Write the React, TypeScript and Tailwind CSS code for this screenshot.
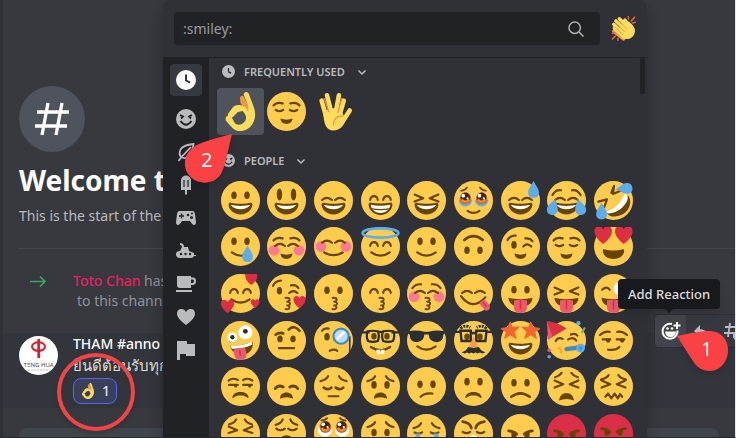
import React from 'react';

const BROWN = '#664500';

const line = {
  fill: 'none',
  stroke: BROWN,
  strokeWidth: 2,
  strokeLinecap: 'round' as const,
  strokeLinejoin: 'round' as const,
};

type OvalsProps = { y?: number; ry?: number; left?: number; right?: number };

const Ovals = ({ y = 13.2, ry = 3.5, left = 12, right = 24 }: OvalsProps) => (
  <g fill={BROWN}>
    <ellipse cx={left} cy={y} rx="2.5" ry={ry} />
    <ellipse cx={right} cy={y} rx="2.5" ry={ry} />
  </g>
);

const HappyEyes = () => <path {...line} d="M8.5 17.5q.5-3.5 3.500-3.500t3.500 3.500M20.500 17.500q.5-3.500 3.500-3.500t3.500 3.500" />;

const WideHappyEyes = () => <path {...line} d="M7.5 17.5q4.500-4 9 0M19.500 17.500q4.500-4 9 0" />;

const Lids = () => <path {...line} d="M8 16.500q3.500 2.500 7 0M21 16.500q3.500 2.500 7 0" />;

const Squint = () => <path {...line} d="M7 12.500l8 3.500-8 3M29 12.500l-8 3.500 8 3" />;

const RaisedBrows = () => <path {...line} d="M6 12.500q3-3.500 8.500-2M30 12.500q-3-3.500-8.500-2" />;

const SadBrows = () => <path {...line} d="M6 13q5-1 7-4.500M30 13q-5-1-7-4.500" />;

const OpenMouth = () => (
  <>
    <path fill={BROWN} d="M18 21c-3.600 0-6-.4-9-1-.7-.1-2 0-2 2 0 4 4.600 9 11 9s11-5 11-9c0-2-1.300-2.100-2-2-3 .6-5.400 1-9 1z" />
    <path fill="#fff" d="M9 22s3 1 9 1 9-1 9-1-2 4-9 4-9-4-9-4z" />
  </>
);

const SoftSmile = () => <path {...line} d="M9.500 23.500q8.500 6 17 0" />;

const TinySmile = () => <path fill={BROWN} d="M12.500 24.500q5.500 2 11 0c0 3-2.500 5-5.500 5s-5.500-2-5.500-5z" />;

const Frown = () => <path fill={BROWN} d="M10.500 28C11 24.500 14 23 18 23s7 1.500 7.500 5c.1.600-.5.700-1 .3C22.500 26.800 21 26.300 18 26.300s-4.500.5-6.500 2c-.5.400-1.100.3-1-.3z" />;

const SmallFrown = () => <path fill={BROWN} d="M12 29c0-3.500 2.500-5.500 6-5.500s6 2 6 5.500c-1 .5-3-1-6-1s-5 1.500-6 1z" />;

const Kiss = () => <path {...line} strokeWidth="1.7" d="M17 22c5-.5 5 3 1.500 3.500 4 .5 3.500 3.500 0 3.500 3.500.5 3 4-1.500 3.500" />;

const Tongue = () => (
  <>
    <path fill={BROWN} d="M7 22c5 1.500 17 1.500 22 0 0 6-5 8-11 8S7 28 7 22z" />
    <path fill="#ea596e" d="M12 24.500q6-2 12 0v6.500q0 5-6 5t-6-5z" />
    <path fill="none" stroke="#dd2e44" strokeWidth="1.5" strokeLinecap="round" d="M18 25v7" />
  </>
);

const Heart = ({ x, y, s }: { x: number; y: number; s: number }) => (
  <path
    fill="#dd2e44"
    transform={`translate(${x} ${y}) scale(${s})`}
    d="M0 9C-4 6-9 1-9-4c0-6 7-7 9-2 2-5 9-4 9 2 0 5-5 10-9 13z"
  />
);

const Tear = ({ x, y, turn = 0 }: { x: number; y: number; turn?: number }) => (
  <path fill="#5dadec" transform={`translate(${x} ${y}) rotate(${turn})`} d="M0-8c2 4 5 7 5 10.500C5 5.500 3 7.500 0 7.500s-5-2-5-5C-5-1-2-4 0-8z" />
);

const Cheeks = ({ y = 20 }: { y?: number }) => (
  <g fill="#ff7892">
    <circle cx="6.5" cy={y} r="5" />
    <circle cx="29.5" cy={y} r="5" />
  </g>
);

const AngryEyes = () => (
  <>
    <Ovals y={19} ry={3} />
    <path {...line} strokeWidth="2.5" d="M7 15.500q4 0 7.500 3M29 15.500q-4 0-7.500 3" />
  </>
);

const GlassyEyes = ({ y }: { y: number }) => (
  <>
    <circle cx="10.5" cy={y} r="5.5" fill="#c1694f" />
    <circle cx="25.5" cy={y} r="5.5" fill="#c1694f" />
    <circle cx="10.5" cy={y - 1} r="4.3" fill="#422b0d" />
    <circle cx="25.5" cy={y - 1} r="4.3" fill="#422b0d" />
    <path fill="none" stroke="#f4900c" strokeWidth="2" d={`M7 ${y + 1}q3.500 4 7 0M22 ${y + 1}q3.500 4 7 0`} />
    <g fill="#fff">
      <circle cx="8.5" cy={y - 2.5} r="1.7" />
      <circle cx="12.5" cy={y} r="1" />
      <circle cx="23.5" cy={y - 2.5} r="1.7" />
      <circle cx="27.5" cy={y} r="1" />
    </g>
  </>
);

const faces: [string, React.ReactNode][] = [
  ['grinning', <><Ovals /><OpenMouth /></>],
  ['smiley', <><Ovals y={12.5} ry={5.5} left={11.5} right={24.5} /><OpenMouth /></>],
  ['smile', <><WideHappyEyes /><OpenMouth /></>],
  ['grin', (
    <>
      <HappyEyes />
      <path fill={BROWN} d="M7 22c0-2 1.300-2.200 2-2 6 1 12 1 18 0 .7-.2 2 0 2 2 0 4-4.500 9.500-11 9.500S7 26 7 22z" />
      <path fill="#fff" d="M9 22c6 1.200 12 1.200 18 0 0 4-4 7.500-9 7.500S9 26 9 22z" />
      <path fill="none" stroke={BROWN} strokeWidth="1.2" d="M9 25.500q9 2 18 0" />
    </>
  )],
  ['laughing', <><Squint /><OpenMouth /></>],
  ['face holding back tears', (
    <>
      <path {...line} strokeWidth="1.5" d="M6.500 9q4-.5 5.500-3M29.500 9q-4-.5-5.500-3" />
      <ellipse cx="10.5" cy="18" rx="6" ry="5.5" fill="#5dadec" />
      <ellipse cx="25.5" cy="18" rx="6" ry="5.5" fill="#5dadec" />
      <ellipse cx="10.5" cy="15.5" rx="6" ry="4.5" fill="#fff" />
      <ellipse cx="25.5" cy="15.5" rx="6" ry="4.5" fill="#fff" />
      <GlassyEyes y={16} />
      <path {...line} d="M12.500 27.500q5.500 4 11 0" />
    </>
  )],
  ['sweat smile', <><WideHappyEyes /><OpenMouth /><Tear x={30} y={8} /></>],
  ['joy', <><path {...line} d="M5 13q3-5.500 8-4.500M31 13q-3-5.500-8-4.500" /><WideHappyEyes /><OpenMouth /><Tear x={5.5} y={24} turn={15} /><Tear x={30.5} y={24} turn={-15} /></>],
  ['rolling on the floor laughing', (
    <>
      <path {...line} d="M4 19l8-2-2.500 7M16 11l2.500-6.500L17.500 12l7-3" />
      <path fill={BROWN} d="M31 13c5 5 2 14-4 17.500-5 3-13 3.500-15-1 9-1 15-7 19-16.500z" />
      <path fill="#fff" d="M29.500 12c2 1 2 4 1 6.500-3 6-9 11-17 11.500-1.500 0-2-1.500-1-2 8-3 12-8 15.500-15.500.4-.8 1-.9 1.500-.5z" />
      <Tear x={28} y={7} turn={-95} />
      <Tear x={7} y={28} />
    </>
  )],
  ['smiling face with tear', <><Ovals /><path {...line} d="M10 23.500q8 5.500 15 1" /><Tear x={24.5} y={25} /></>],
  ['relaxed', <><Cheeks y={21.5} /><RaisedBrows /><WideHappyEyes /><TinySmile /></>],
  ['blush', <><Cheeks y={18} /><path {...line} d="M7.500 14.500q4.500-4 9 0M19.500 14.500q4.500-4 9 0" /><path {...line} d="M9.500 23.500q8.500 5 17 0" /></>],
  ['innocent', (
    <>
      <HappyEyes />
      <SoftSmile />
      <ellipse cx="18" cy="5.500" rx="16.5" ry="4.3" fill="none" stroke="#5dadec" strokeWidth="2.5" />
    </>
  )],
  ['slight smile', <><Ovals /><SoftSmile /></>],
  ['upside down', <><Ovals y={21.5} /><path {...line} strokeWidth="2.5" d="M9.500 12q8.500-7 17 0" /></>],
  ['wink', <><path {...line} d="M6 12q2.500-4.500 7.500-4M22.500 10.500q4-.5 6.500 2.500" /><ellipse cx="12" cy="16.5" rx="2.5" ry="3.5" fill={BROWN} /><path {...line} d="M20.500 18q4-4 7.500 0" /><TinySmile /></>],
  ['relieved', <><RaisedBrows /><Lids /><TinySmile /></>],
  ['heart eyes', <><Heart x={8.5} y={7.5} s={0.9} /><Heart x={27.5} y={7.5} s={0.9} /><path fill={BROWN} d="M9 20.500q9 2.500 18 0c2 0 1 9-9 9s-11-9-9-9z" /></>],
  ['smiling face with hearts', <><HappyEyes /><SoftSmile /><Heart x={28} y={4.5} s={0.62} /><Heart x={6} y={30} s={0.68} /><Heart x={31.5} y={27.5} s={0.45} /></>],
  ['kissing heart', <><path {...line} d="M5.500 11q2-4.500 7.500-5M22 10.500q5-1 7 2.500" /><ellipse cx="11.5" cy="15.5" rx="2.5" ry="3.5" fill={BROWN} /><path {...line} d="M20.500 17.500q4-3.500 7.500 0" /><Kiss /><Heart x={30} y={26} s={0.62} /></>],
  ['kissing', <><Ovals y={15} /><Kiss /></>],
  ['kissing smiling eyes', <><HappyEyes /><Kiss /></>],
  ['kissing closed eyes', <><Cheeks y={21} /><path {...line} d="M5 13q3-4 8-3.500M31 13q-3-4-8-3.500" /><WideHappyEyes /><Kiss /></>],
  ['yum', <><WideHappyEyes /><path {...line} d="M6.500 20.500q11 14 22.500 1" /><path fill="#ea596e" d="M23 27l5-4 5 6q1 5-4 5z" /><path stroke="#dd2e44" strokeWidth="1.2" d="M26.500 26l3.500 4" /></>],
  ['stuck out tongue', <><Ovals y={14.5} /><Tongue /></>],
  ['squinting tongue', <><Squint /><Tongue /></>],
  ['winking tongue', <><path {...line} d="M7.500 14.500q4.500-4 7 0" /><circle cx="24" cy="13.5" r="6" fill="#f5f8fa" /><circle cx="25" cy="13.5" r="2" fill="#292f33" /><Tongue /></>],
  ['zany', (
    <>
      <circle cx="10.5" cy="15" r="4.5" fill="#fff" />
      <circle cx="22.5" cy="10.5" r="6.5" fill="#fff" />
      <circle cx="10.5" cy="15" r="2" fill="#292f33" />
      <circle cx="22.5" cy="9.5" r="2.2" fill="#292f33" />
      <path fill={BROWN} d="M8.500 22.500q12 1 20.500-4c1.500 6-2 12-8 12.500-8 1-12-4-12.500-8.500z" />
      <path fill="#fff" d="M8.500 22.500q12 1 20.500-4l-.5 3.500q-8 4-18.500 3.500z" />
      <path fill="#ea596e" d="M11 27q6-3 11.500-2l1 6q0 5-5 5t-6-4z" />
      <path stroke="#dd2e44" strokeWidth="1.5" d="M17 27l1 5" />
    </>
  )],
  ['raised eyebrow', <><Ovals y={16.5} ry={3.2} /><path {...line} d="M8 12.500q4-2.500 7-1M20 8q5-5 10 1" strokeWidth="2.5" /><path {...line} d="M11 25h14" /></>],
  ['monocle', (
    <>
      <ellipse cx="12" cy="14.5" rx="2.5" ry="3.5" fill={BROWN} />
      <path {...line} d="M7.500 9q2-3 6-2M14.500 27.500q4-2 7 0" />
      <path fill="none" stroke="#31373d" strokeWidth="1.5" d="M33 14v15" />
      <circle cx="25" cy="14" r="7" fill="#bbddf5" stroke="#4289c1" strokeWidth="2" />
      <path stroke="#fff" strokeWidth="2.5" d="M21 17l7-7" />
    </>
  )],
  ['nerd', (
    <>
      <Ovals y={14} ry={3} />
      <path fill="none" stroke="#292f33" strokeWidth="2" d="M1 10.500h7M28 10.500h7M6 9.500q4.500-1 9.500 0 2 4 0 9-4.500 1.500-9 0-2-4-.5-9zM30 9.500q-4.500-1-9.500 0-2 4 0 9 4.500 1.500 9 0 2-4 .5-9zM15 11q3-2 6 0" />
      <path {...line} d="M9 24q9 6 18 0" />
      <path fill="#fff" d="M14 26.500h3.700v4H15zM18.300 26.500H22l-1 4h-2.700z" />
    </>
  )],
  ['sunglasses', <><path fill="#292f33" d="M1 9.500q8-1.500 15 .5h4q7-2 15-.5v2l-1.500 1q0 7-6 7-7 0-7.500-7h-4q-.5 7-7.500 7-6 0-6-7L1 11.500z" /><SoftSmile /></>],
  ['disguised', (
    <>
      <Ovals y={14.5} ry={3} />
      <path fill="none" stroke="#292f33" strokeWidth="2.2" d="M1 10h5M30 10h5M6 9h9.500v9.500H7zM30 9h-9.500v9.500H29zM15 12q3-2 6 0" />
      <path stroke="#292f33" strokeWidth="2.5" strokeDasharray="2 1" fill="none" d="M6 7q4-4 9-1M30 7q-4-4-9-1" />
      <path fill="#ff9d4d" d="M18 14l2.500 6q4 5.500-2.500 5.500t-2.500-5.500z" />
      <path fill="#292f33" d="M18 25l5-1 2 3 4 2-3 1-2-1-2 1-2-1-2 1-2-1-2 1-2-1-2 1-3-1 4-2 2-3z" />
    </>
  )],
  ['star struck', (
    <>
      <OpenMouth />
      <path fill="#f4642d" stroke="#f4642d" strokeLinejoin="round" d="M8.500 1l2 5 6-.5-4.500 4.500 2 6-5.500-3.500-5 3.500 1.500-6L0 7l6.500-1zM27.500 1l-2 5-6-.5L24 10l-2 6 5.500-3.500 5 3.500-1.500-6L36 7l-6.500-1z" />
    </>
  )],
  ['partying', (
    <>
      <path fill="#dd2e44" d="M0 0q10 1 18 7L1 17z" />
      <path fill="#ea596e" d="M0 0l5 14-4 3z" />
      <path {...line} d="M8 18.500q2-4 6.500-2M19.500 17q5-3 7.500 1M22 12.500q4-1.500 6 1" />
      <path fill="none" stroke="#ff9d33" strokeWidth="1.5" d="M10 25q4 0 3 5" />
      <path stroke="#4289c1" strokeWidth="4" strokeLinecap="round" d="M18 26l15-2" />
      <circle cx="31" cy="25" r="4" fill="#5dadec" />
      <circle cx="31" cy="25" r="1.5" fill="#4289c1" />
      <circle cx="29" cy="2" r="2" fill="#5dadec" />
      <circle cx="2" cy="33" r="1.6" fill="#5dadec" />
      <circle cx="2" cy="27" r="1.6" fill="#ea596e" />
      <path stroke="#77b255" strokeWidth="2" d="M32 11l3-5" />
    </>
  )],
  ['smirk', <><path {...line} d="M5.500 13q4-4 9-3M30.500 13q-4-4-9-3M8 17h7M21 17h7" /><circle cx="13" cy="18" r="2" fill={BROWN} /><circle cx="26" cy="18" r="2" fill={BROWN} /><path {...line} d="M13 26.500q7 1 10.500-2.500" /></>],
  ['unamused', <><path {...line} d="M7 12.500q4-3 8.500-.5M29 12.500q-4-3-8.500-.5M7.500 16.500h8M20.500 16.500h8" /><circle cx="13.500" cy="17.5" r="1.5" fill={BROWN} /><circle cx="26.500" cy="17.5" r="1.5" fill={BROWN} /><Frown /></>],
  ['disappointed', <><path {...line} strokeWidth="2.5" d="M7.500 20q3-4 7.500-1.500M28.500 20q-3-4-7.500-1.500" /><SmallFrown /></>],
  ['pensive', <><SadBrows /><path {...line} strokeWidth="2.5" d="M9 19q4 3 7 0M20 19q4 3 7 0" /><path {...line} d="M13.500 27h9" /></>],
  ['worried', <><SadBrows /><Ovals y={16.5} /><SmallFrown /></>],
  ['confused', <><Ovals y={16} /><path {...line} d="M12.500 27.500q4-4 11-3" /></>],
  ['slight frown', <><Ovals y={13.5} /><Frown /></>],
  ['frowning', <><Ovals y={14.5} /><path {...line} strokeWidth="2.5" d="M9.500 27.500q8.500-6.500 17 0" /></>],
  ['tired', <><path {...line} d="M7.500 9.500q4-1 6-4M28.500 9.500q-4-1-6-4" /><Squint /><path fill={BROWN} d="M11 31q1-7 7-7t7 7q-7-3-14 0z" /></>],
  ['confounded', <><path {...line} d="M6.500 11.500q5-1 7-4M29.500 11.500q-5-1-7-4" /><Squint /><path {...line} d="M10.500 27.500l2.500-3 3 4.500 3-4.500 3 4.500 2-4 2 2.500" /></>],
  ['persevere', <><path {...line} d="M7.500 9.500q5-1 6.500-4.500M28.500 9.500q-5-1-6.500-4.500" /><path {...line} d="M7 11.500l8 3.500-8 2.500M29 11.500l-8 3.500 8 2.500" /><Frown /></>],
  ['weary', <><path {...line} d="M8 10q5-1 6.500-5M28 10q-5-1-6.500-5" /><path {...line} d="M8.500 13.500q4 3 8 0M19.500 13.500q4 3 8 0" /><path fill={BROWN} d="M11 27q1-7.500 7-7.500t7 7.500z" /></>],
  ['pleading', (
    <>
      <path {...line} d="M7 6q3 0 5-2M29 6q-3 0-5-2" />
      <ellipse cx="10" cy="15" rx="6.5" ry="6" fill="#fff" />
      <ellipse cx="26" cy="15" rx="6.5" ry="6" fill="#fff" />
      <GlassyEyes y={12} />
    </>
  )],
  ['fearful', <><path {...line} d="M6 12q5-1 7-4.500M30 12q-5-1-7-4.500" /><Ovals y={17} /><Frown /></>],
  ['cry', <><path {...line} d="M6 13q5-1 7-4.500M30 13q-5-1-7-4.500M7 17q4 2 7 0M22 17q4 2 7 0" /><path fill="#5dadec" d="M8 18h4v16H8zM25 18h4v16h-4z" /><Frown /></>],
  ['triumph', <><path {...line} strokeWidth="2.5" d="M8 7q7 1 8 6M28 7q-7 1-8 6" /><Lids /><path fill="#fff" d="M13 22l5-3 5 3v8H13z" /></>],
  ['angry', <><AngryEyes /><Frown /></>],
  ['rage', <><AngryEyes /><Frown /></>],
  ['cursing', <><Ovals y={17} ry={3} /><path {...line} strokeWidth="2.5" d="M7 13.500q4 0 7.500 3M29 13.500q-4 0-7.500 3" /><path fill="#31373d" d="M6 24h24v7H6z" /></>],
];

const faceFill = (name: string) => (name === 'rage' || name === 'cursing' ? '#da2f47' : '#ffcc4d');

const Emoji = ({ name, children }: { name: string; children: React.ReactNode }) => (
  <svg viewBox="0 0 36 36" className="w-[39px] h-[39px]" aria-hidden="true">
    <circle cx="18" cy="18" r="18" fill={faceFill(name)} />
    {children}
  </svg>
);

const OkHand = ({ className }: { className: string }) => (
  <svg viewBox="0 0 36 36" className={className} aria-hidden="true">
    <path fill="#ef9645" d="M17.500 6c0-3 3-3.500 4-1l6 13-4 3-5.500-11z" />
    <path
      fill="#ffdc5d"
      d="M21 2.500c0-3 4-3.500 5 0l3.500 9.500c2 4.500 2.500 9 1.500 13-1.500 6-6 10.500-12 11-4 .3-7-1-9.500-4L5 27c-2-3 .5-6 3.500-5 1.500.5 2 2.500 3.500 5.500 1.500 3 5 3.500 8 1.500 3-2 4-5 2.500-8L20 17.500l-4.500 1-4 4c-2 2-6 .5-5-2.500L11 14c2-1.800 5-2.500 8-1.500l6.500 3-1-4z"
    />
    <path fill="none" stroke="#ef9645" strokeWidth="1.2" strokeLinecap="round" d="M21 9l4 8" />
  </svg>
);

const Vulcan = () => (
  <svg viewBox="0 0 36 36" className="w-[39px] h-[39px]" aria-hidden="true">
    <g stroke="#ffdc5d" strokeWidth="4.200" strokeLinecap="round" fill="none">
      <path d="M7 8l4 14M12 3l4 16M23 3l-3 16M27.500 8L24 20" />
      <path d="M33 17l-7 11" />
    </g>
    <path fill="#ffdc5d" d="M8.500 18l8-3h2.500l7 4 3 6c-1 6-5 10.500-11 10.500-7 0-9-6-9.500-17.500z" />
    <path fill="none" stroke="#ef9645" strokeWidth="1.200" strokeLinecap="round" d="M9.500 6l4 12M25.500 6L22 19M27 22q-9 0-9 8" />
  </svg>
);

const Clap = () => (
  <svg viewBox="0 0 36 36" className="w-[25px] h-[25px]" aria-hidden="true">
    <g stroke="#ef9645" strokeWidth="5" strokeLinecap="round">
      <path d="M5 16l14 14M4 22l14 11" />
    </g>
    <g stroke="#ffdc5d" strokeWidth="5" strokeLinecap="round">
      <path d="M12 4l14 14M7 7l16 16M4 12l16 16M5 18l14 13M20 6l10 12" />
    </g>
    <path fill="#ffdc5d" d="M13 13l10-6q8 4 11 11c2 6-2 14-9 15-6 1-10-3-13-7z" />
    <path fill="none" stroke="#ef9645" strokeWidth="1.3" strokeLinecap="round" d="M11 7l12 12M8 11l12 12M6 16l11 11" />
    <path stroke="#e5633e" strokeWidth="2.2" strokeLinecap="round" d="M25 4V1M29 7l5-5M31 10l4-1M2 25l3-1M2 33l4-4M10 35v-3" />
  </svg>
);

const Clock = ({ className }: { className: string }) => (
  <svg viewBox="0 0 20 20" className={className} aria-hidden="true">
    <circle cx="10" cy="10" r="10" fill="currentColor" />
    <path d="M10 4.500v6l4 2" fill="none" stroke="#202225" strokeWidth="1.8" />
  </svg>
);

const Smile = ({ className }: { className: string }) => (
  <svg viewBox="0 0 20 20" className={className} aria-hidden="true">
    <circle cx="10" cy="10" r="10" fill="currentColor" />
    <g fill="none" stroke="#202225" strokeWidth="1.8">
      <path d="M4 6l3 1.500L5 9.500M16 6l-3 1.500 2 2" />
      <path d="M4.500 12q5.500 7.500 11 0" strokeWidth="2" />
    </g>
  </svg>
);

const Chevron = () => (
  <svg viewBox="0 0 10 10" className="w-[10px] h-[10px]" aria-hidden="true">
    <path d="M1.500 3.500L5 7l3.500-3.500" fill="none" stroke="currentColor" strokeWidth="1.5" />
  </svg>
);

const categories: [string, React.ReactNode][] = [
  ['People', <Smile className="w-5 h-5" />],
  ['Nature', (
    <svg viewBox="0 0 20 20" className="w-5 h-5">
      <path d="M2.500 19l3-4M17.500 2Q7 3 4.500 7.500C3 11 3.500 14 6 15.500c5 2 10-1 11.500-13.500zM5.500 15L15 5" fill="none" stroke="currentColor" strokeWidth="1.8" />
    </svg>
  )],
  ['Food', (
    <svg viewBox="0 0 20 20" className="w-5 h-5">
      <path d="M5 5.500a5 5 0 0 1 10 0V15h-4v4.500H9V15H5z" fill="currentColor" />
      <path d="M8 5v7M12 5v7" stroke="#202225" strokeWidth="1.2" />
    </svg>
  )],
  ['Activities', (
    <svg viewBox="0 0 20 20" className="w-5 h-5">
      <path d="M3.500 3h13q2 0 2.500 3l1 8q0 3-2 3-1.500 0-4-4H6q-2.500 4-4 4-2 0-2-3l1-8q.5-3 2.500-3z" fill="currentColor" />
      <path d="M5.500 5.500v5M3 8h5" stroke="#202225" strokeWidth="1.5" />
      <g fill="#202225">
        <circle cx="12" cy="7" r="1.3" />
        <circle cx="15.5" cy="9.5" r="1.5" />
        <circle cx="16" cy="5.500" r="1" />
      </g>
    </svg>
  )],
  ['Travel', (
    <svg viewBox="0 0 20 20" className="w-5 h-5">
      <path d="M4 2q4 0 4 4h4l1 4 5 2v2h2v1h-2q-1 2-3 2H4q-4 0-4-4 0-3 4-3l2-4q0-2-2-2z" fill="currentColor" />
      <g fill="#202225">
        <circle cx="5" cy="13" r="1.2" />
        <circle cx="9.5" cy="13" r="1.2" />
        <circle cx="14" cy="13" r="1.2" />
      </g>
    </svg>
  )],
  ['Objects', (
    <svg viewBox="0 0 20 20" className="w-5 h-5">
      <path d="M1 2h14v12H4q-3 0-3-3zM0 16h16v2H0z" fill="currentColor" />
      <path d="M15 4.500h2q2 0 2 2.500t-2 3h-2" fill="none" stroke="currentColor" strokeWidth="2" />
    </svg>
  )],
  ['Symbols', (
    <svg viewBox="0 0 20 20" className="w-5 h-5">
      <path d="M10 18Q1 11.500 1 7q0-5 4.500-5Q8.500 2 10 5q1.500-3 4.500-3Q19 2 19 7q0 4.500-9 11z" fill="currentColor" />
    </svg>
  )],
  ['Flags', (
    <svg viewBox="0 0 20 20" className="w-5 h-5">
      <path d="M1 1h10v3h8v12h-9v-2H4v6H1z" fill="currentColor" />
    </svg>
  )],
];

const SectionHeader = ({ icon, label, className }: { icon: React.ReactNode; label: string; className: string }) => (
  <h2 className={`flex items-center pl-[5px] text-[#b9bbbe] ${className}`}>
    {icon}
    <span className="ml-[9px] mr-3 text-[11px] leading-4 font-semibold uppercase">{label}</span>
    <Chevron />
  </h2>
);

const EmojiPicker = () => (
  <div className="absolute z-10 inset-y-0 left-[163px] right-[88px] flex flex-col overflow-hidden rounded-t-lg bg-[#2f3136] shadow-[0_8px_16px_rgba(0,0,0,0.24)]">
    <header className="flex items-center gap-[11px] py-3 pl-[11px] pr-[11px] border-b border-[#202225]">
      <div className="flex flex-1 items-center h-[33px] min-w-0 rounded bg-[#202225] pl-[9px] pr-4">
        <input
          type="text"
          aria-label="Search emoji"
          placeholder=":smiley:"
          className="flex-1 min-w-0 bg-transparent text-[14px] leading-5 text-gray-200 placeholder:text-[#9b9da1] outline-none"
        />
        <svg viewBox="0 0 16 16" className="w-4 h-4 text-[#b0b2b6]" aria-hidden="true">
          <circle cx="6.7" cy="6.7" r="5.7" fill="none" stroke="currentColor" strokeWidth="1.5" />
          <path d="M11 11l4.500 4.500" stroke="currentColor" strokeWidth="1.5" />
        </svg>
      </div>
      <button type="button" aria-label="Skin tone"><Clap /></button>
    </header>

    <div className="flex flex-1 min-h-0">
      <nav className="flex w-[46px] shrink-0 flex-col items-center bg-[#202225] pt-[6px] text-[#b9bbbe]">
        <button type="button" aria-label="Frequently used" className="mb-[6px] flex h-8 w-8 items-center justify-center rounded bg-[#36393f] text-white">
          <Clock className="w-5 h-5" />
        </button>
        {categories.map(([name, icon]) => (
          <button key={name} type="button" aria-label={name} className="flex h-[33px] w-8 items-center justify-center">
            {icon}
          </button>
        ))}
      </nav>

      <div className="flex-1 min-w-0 overflow-hidden pl-2 pr-[3px]">
        <SectionHeader icon={<Clock className="w-[13px] h-[13px]" />} label="Frequently used" className="h-[30px] pb-[3px]" />
        <div className="grid grid-cols-9">
          <button type="button" aria-label="ok hand" className="flex aspect-square items-center justify-center rounded bg-[#4f545c]">
            <OkHand className="w-[39px] h-[39px]" />
          </button>
          <button type="button" aria-label="relieved" className="flex aspect-square items-center justify-center">
            <Emoji name="relieved"><RaisedBrows /><Lids /><TinySmile /></Emoji>
          </button>
          <button type="button" aria-label="vulcan" className="flex aspect-square items-center justify-center">
            <Vulcan />
          </button>
        </div>
        <SectionHeader icon={<Smile className="w-[13px] h-[13px]" />} label="People" className="h-[42px] pt-3 pb-[2px]" />
        <div className="grid grid-cols-9">
          {faces.map(([name, features]) => (
            <button key={name} type="button" aria-label={name} className="flex aspect-square items-center justify-center">
              <Emoji name={name}>{features}</Emoji>
            </button>
          ))}
        </div>
      </div>
      <div className="mr-[2px] h-9 w-[5px] rounded-full bg-[#202225]" />
    </div>
  </div>
);

const MessageToolbar = () => (
  <div className="absolute z-20 -top-[18px] -right-[13px] flex h-8 rounded bg-[#36393f] text-[#b9bbbe] shadow-[0_0_0_1px_rgba(4,4,5,0.15)]">
    <button type="button" aria-describedby="reaction-tip" aria-label="Add Reaction" className="flex w-[31px] items-center justify-center rounded-l bg-[#42454b] text-white">
      <svg viewBox="0 0 20 20" className="w-5 h-5" aria-hidden="true">
        <path d="M11 3A7.500 7.500 0 1 0 16.500 9.500" fill="none" stroke="currentColor" strokeWidth="2" />
        <path d="M4 10.500h11q-.5 5.500-5.500 5.500T4 10.500z" fill="currentColor" />
        <circle cx="6.500" cy="7.500" r="1.3" fill="currentColor" />
        <circle cx="11" cy="7.500" r="1.3" fill="currentColor" />
        <path d="M16 1v7M12.500 4.500h7" stroke="currentColor" strokeWidth="2" />
      </svg>
    </button>
    <div id="reaction-tip" role="tooltip" className="absolute bottom-[38px] -left-[37px] whitespace-nowrap rounded bg-[#18191c] px-[10px] py-[5px] text-[13px] leading-5 font-medium text-[#dcddde] shadow-lg">
      Add Reaction
      <span className="absolute top-full left-1/2 -ml-1 border-4 border-transparent border-t-[#18191c]" />
    </div>
    <button type="button" aria-label="Reply" className="flex w-[31px] items-center justify-center">
      <svg viewBox="0 0 20 20" className="w-5 h-5" aria-hidden="true">
        <path d="M8 4L2 10l6 6v-4q6 0 9 5 0-8-9-9z" fill="currentColor" />
      </svg>
    </button>
    <button type="button" aria-label="Create thread" className="flex w-[31px] items-center justify-center">
      <svg viewBox="0 0 20 20" className="w-5 h-5" aria-hidden="true">
        <path d="M7 2L5 16M14 2l-1 7M2 6h16M1 12h9" fill="none" stroke="currentColor" strokeWidth="1.8" />
        <path d="M10 11h9v6h-5l-3 2v-2h-1z" fill="currentColor" />
      </svg>
    </button>
  </div>
);

const Avatar = () => (
  <svg viewBox="0 0 39 39" className="w-[39px] h-[39px] shrink-0" role="img" aria-label="THAM">
    <circle cx="19.5" cy="19.5" r="19.5" fill="#fff" />
    <rect x="18.3" y="3" width="2.8" height="19" fill="#dc1f2e" />
    <ellipse cx="19.5" cy="10.5" rx="6.5" ry="4.3" fill="none" stroke="#dc1f2e" strokeWidth="2" />
    <path d="M14 13.500q5 3.500 11 0" fill="none" stroke="#dc1f2e" strokeWidth="1.2" />
    <text x="19.5" y="31" textAnchor="middle" fontSize="6" fill="#444">TΞNG HUA</text>
    <path d="M9 34h21" stroke="#bbb" strokeDasharray="2 1" />
  </svg>
);

export default function App() {
  return (
    <div className="relative flex h-screen overflow-hidden border-b border-r border-b-[#26282c] border-r-gray-200 bg-[#2f3136] pl-[3px] font-['Noto_Sans','Open_Sans',sans-serif]">
      <main className="flex-1 min-w-0 overflow-hidden bg-[#37393f] pt-[86px]">
        <section className="pl-4">
          <div className="flex h-[66px] w-[66px] items-center justify-center rounded-full bg-[#4f545c]">
            <svg viewBox="0 0 36 34" className="w-9 h-[34px]" aria-hidden="true">
              <path d="M14 1L8 33M28 1l-6 32M3 10h32M1 24h32" fill="none" stroke="#fff" strokeWidth="3.3" />
            </svg>
          </div>
          <h1 className="mt-3 text-[28px] leading-8 font-bold text-white">Welcome t</h1>
          <p className="mt-[10px] text-[14px] leading-5 text-[#b9bbbe]">This is the start of the</p>
          <hr className="mt-[22px] border-[#42454a]" />
        </section>

        <div className="mt-[22px] flex pl-[27px]">
          <svg viewBox="0 0 16 20" className="w-4 h-5 shrink-0" aria-hidden="true">
            <path d="M0 10.500h15M10 5.500l5 5-5 5" fill="none" stroke="#3ba55d" strokeWidth="1.7" />
          </svg>
          <p className="ml-[27px] text-[14px] leading-5 text-[#8e9297]">
            <a href="#toto-chan" className="font-medium text-[#e91e63]">Toto Chan</a> has
            <span className="block pl-1">to this chann</span>
          </p>
        </div>

        <article className="relative mt-[22px] flex h-[75px] gap-[15px] bg-[#32353b] pl-4 pt-px">
          <div className="pt-[2px]"><Avatar /></div>
          <div>
            <h3 className="text-[14px] leading-5 font-medium text-white">THAM #anno</h3>
            <p className="mt-px text-[15px] leading-5 text-[#dcddde]">ยินดีต้อนรับทุก</p>
            <button type="button" className="mt-[3px] flex h-[26px] items-center gap-[6px] rounded-lg border border-[#5865f2] bg-[#3b405a] px-[6px] text-[14px] leading-5 font-medium text-[#dee0fc]">
              <OkHand className="w-4 h-4" />
              1
            </button>
          </div>
          <MessageToolbar />
        </article>

        <div className="ml-4 mr-4 mt-5 h-10 rounded-lg bg-[#40444b]" />
      </main>

      <EmojiPicker />

      {/* walkthrough markers */}
      <div className="absolute z-30 left-[57px] top-[353px] h-[78px] w-[78px] rounded-full border-4 border-[#f24444] shadow-md" />
      <div className="absolute z-30 left-[185px] top-[134px] h-[50px] w-12 drop-shadow-md">
        <svg viewBox="0 0 48 50" className="block h-[50px] w-12" aria-hidden="true">
          <path d="M47 0C34 3 22 7 14 10 1 15-4 29 3 40c8 11 25 12 33 0 4-7 7-24 11-40z" fill="#fa4144" />
        </svg>
        <span className="absolute left-4 top-[14px] text-[20px] leading-6 text-white">2</span>
      </div>
      <div className="absolute z-30 right-[6px] top-[330px] h-[42px] w-[54px] drop-shadow-md">
        <svg viewBox="0 0 54 42" className="block h-[42px] w-[54px]" aria-hidden="true">
          <path d="M2 6C15 3 28 1 36 1c12 1 18 11 17 22-2 12-10 18-19 18-9-1-13-5-16-10C12 22 7 14 2 6z" fill="#fa4144" />
        </svg>
        <span className="absolute left-[26px] top-[7px] text-[20px] leading-6 text-white">1</span>
      </div>
    </div>
  );
}
